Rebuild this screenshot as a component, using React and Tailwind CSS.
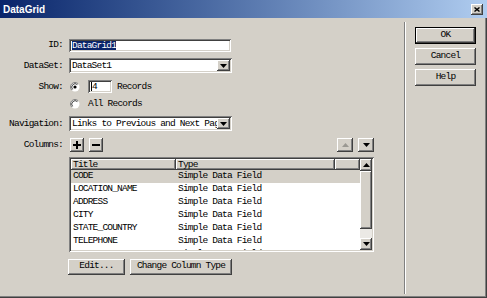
const font = "font-['Liberation_Mono',monospace] text-[9.5px] tracking-[-0.8px] text-black";
const raised = "bg-[#d4d0c8] shadow-[inset_-1px_-1px_#404040,inset_1px_1px_#ffffff,inset_-2px_-2px_#808080]";
const sunken = "shadow-[inset_1px_1px_#808080,inset_-1px_-1px_#ffffff,inset_2px_2px_#404040,inset_-2px_-2px_#d4d0c8]";

const rows = [
  ['CODE', 'Simple Data Field'],
  ['LOCATION_NAME', 'Simple Data Field'],
  ['ADDRESS', 'Simple Data Field'],
  ['CITY', 'Simple Data Field'],
  ['STATE_COUNTRY', 'Simple Data Field'],
  ['TELEPHONE', 'Simple Data Field'],
  ['FAX', 'Simple Data Field'],
];

function Arrow({ up = false, color = '#000' }) {
  return (
    <svg width="7" height="4" viewBox="0 0 7 4">
      <path d={up ? 'M0 4h7L3.5 0z' : 'M0 0h7L3.5 4z'} fill={color} />
    </svg>
  );
}

function Radio({ checked }) {
  return (
    <svg width="10" height="10" viewBox="0 0 10 10">
      <circle cx="5" cy="5" r="4.5" fill="#fff" />
      <path d="M8.2 1.8A4.5 4.5 0 0 0 1.8 8.2" stroke="#808080" fill="none" />
      <path d="M7.4 2.6A3.4 3.4 0 0 0 2.6 7.4" stroke="#404040" fill="none" />
      {checked && <circle cx="5" cy="5" r="1.6" fill="#000" />}
    </svg>
  );
}

function Select({ value }) {
  return (
    <div className={`ml-[6px] flex h-[15px] w-[163px] bg-white p-[2px] ${sunken}`}>
      <div className="flex-1 overflow-hidden whitespace-nowrap pl-[1px] leading-[11px]">{value}</div>
      <div className={`flex h-full w-[13px] items-center justify-center ${raised}`}>
        <Arrow />
      </div>
    </div>
  );
}

function Button({ children, className = '' }) {
  return (
    <div className={`flex items-center justify-center ${raised} ${className}`}>{children}</div>
  );
}

export default function App() {
  return (
    <div className={`flex h-[298px] w-[487px] flex-col overflow-hidden bg-[#d4d0c8] shadow-[inset_-1px_-1px_#404040,inset_-2px_-2px_#808080] ${font}`}>
      {/* Title bar */}
      <div className="flex h-[18px] items-center bg-linear-to-r from-[#0a246a] to-[#b0cdf0] pl-[3px] pr-[4px]">
        <span className="font-['Liberation_Sans',sans-serif] text-[10px] font-bold tracking-normal text-white">DataGrid</span>
        <div className={`ml-auto flex h-[11px] w-[12px] items-center justify-center ${raised}`}>
          <svg width="6" height="5" viewBox="0 0 6 5">
            <path d="M0.5 0.5l5 4M5.5 0.5l-5 4" stroke="#000" strokeWidth="1.4" />
          </svg>
        </div>
      </div>

      <div className="flex flex-1">
        {/* Left form */}
        <div className="flex w-[404px] flex-col pt-[20px]">
          <div className="flex items-center">
            <span className="w-[63px] text-right">ID:</span>
            <div className={`ml-[6px] flex h-[13px] w-[162px] items-center bg-white pl-[3px] ${sunken}`}>
              <span className="bg-[#0a246a] leading-[9px] text-white">DataGrid1</span>
            </div>
          </div>

          <div className="mt-[6px] flex items-center">
            <span className="w-[63px] text-right">DataSet:</span>
            <Select value="DataSet1" />
          </div>

          <div className="mt-[7px] flex h-[13px] items-center">
            <span className="w-[63px] text-right">Show:</span>
            <span className="ml-[7px] flex"><Radio checked /></span>
            <div className={`ml-[8px] flex h-[13px] w-[24px] shrink-0 items-center bg-white pl-[3px] ${sunken}`}>
              <span className="border-l border-black leading-[9px]">4</span>
            </div>
            <span className="ml-[5px]">Records</span>
          </div>

          <div className="mt-[5px] flex h-[12px] items-center">
            <span className="ml-[70px] flex"><Radio /></span>
            <span className="ml-[8px]">All Records</span>
          </div>

          <div className="mt-[6px] flex items-center">
            <span className="w-[63px] text-right">Navigation:</span>
            <Select value="Links to Previous and Next Pages" />
          </div>

          <div className="mt-[7px] flex w-[374px] items-center">
            <span className="w-[63px] text-right">Columns:</span>
            <Button className="ml-[7px] h-[14px] w-[14px]">
              <svg width="8" height="8" viewBox="0 0 8 8"><path d="M3 0h2v3h3v2H5v3H3V5H0V3h3z" fill="#000" /></svg>
            </Button>
            <Button className="ml-[5px] h-[14px] w-[14px]">
              <svg width="8" height="2" viewBox="0 0 8 2"><path d="M0 0h8v2H0z" fill="#000" /></svg>
            </Button>
            <Button className="ml-auto h-[14px] w-[16px]"><Arrow up color="#9a9892" /></Button>
            <Button className="ml-[5px] h-[14px] w-[16px]"><Arrow /></Button>
          </div>

          {/* Columns list */}
          <div className={`ml-[69px] mt-[4px] flex h-[95px] w-[305px] bg-white p-[2px] ${sunken}`}>
            <div className="flex flex-1 flex-col overflow-hidden">
              <div className="flex h-[11px] shrink-0 leading-[11px]">
                <div className={`w-[105px] pl-[2px] ${raised}`}>Title</div>
                <div className={`w-[159px] pl-[2px] ${raised}`}>Type</div>
                <div className={`flex-1 ${raised}`} />
              </div>
              {rows.map(([title, type], i) => (
                <div
                  key={title}
                  className={`flex h-[13px] shrink-0 items-center whitespace-nowrap ${i === 0 ? 'bg-[#d4d0c8]' : 'bg-white'}`}
                >
                  <span className="w-[105px] pl-[2px]">{title}</span>
                  <span className="pl-[2px]">{type}</span>
                </div>
              ))}
            </div>
            <div className="flex w-[12px] flex-col bg-[#ebe9e5]">
              <Button className="h-[12px] shrink-0"><Arrow up /></Button>
              <div className={`h-[58px] shrink-0 ${raised}`} />
              <div className="flex-1" />
              <Button className="h-[12px] shrink-0"><Arrow /></Button>
            </div>
          </div>

          <div className="ml-[68px] mt-[7px] flex gap-[5px]">
            <Button className="h-[16px] w-[57px]">Edit...</Button>
            <Button className="h-[16px] w-[102px]">Change Column Type</Button>
          </div>
        </div>

        {/* Separator */}
        <div className="mb-[4px] mt-[4px] w-[2px] border-l border-[#808080] bg-white" />

        {/* Right buttons */}
        <div className="flex flex-col gap-[4px] pl-[9px] pt-[9px]">
          <div className="h-[17px] w-[61px] border border-black">
            <Button className="h-full w-full">OK</Button>
          </div>
          <Button className="h-[17px] w-[61px]">Cancel</Button>
          <Button className="h-[17px] w-[61px]">Help</Button>
        </div>
      </div>
    </div>
  );
}
